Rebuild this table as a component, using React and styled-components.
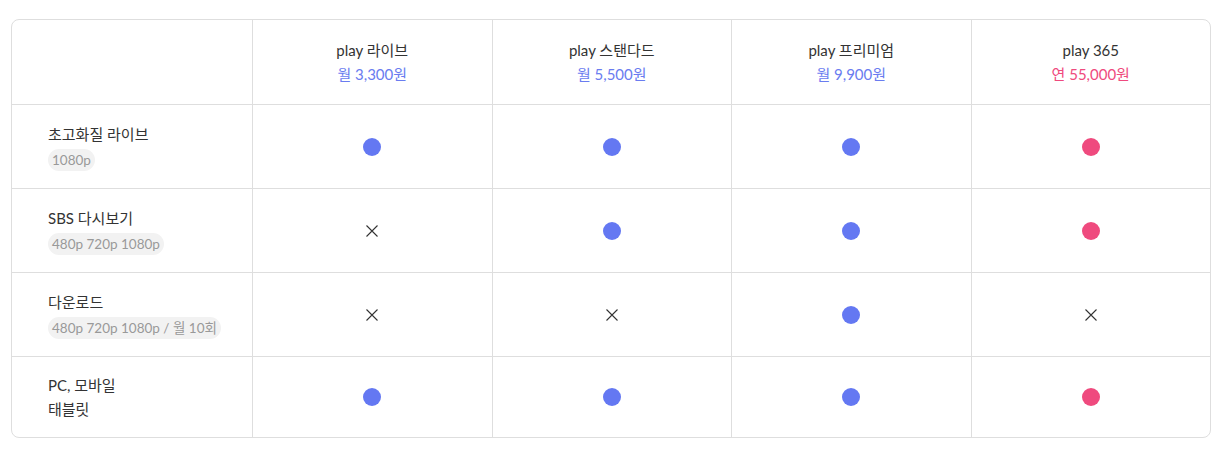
import React from "react";
import styled, { createGlobalStyle } from "styled-components";

const Global = createGlobalStyle`
  html, body { margin: 0; padding: 0; background: #fff; }
  body { font-family: "Lato", "Noto Sans CJK KR", sans-serif; color: #333; }
`;

const Page = styled.div`
  padding: 19px 15px 16px 11px;
`;

const Table = styled.div`
  width: 1200px;
  box-sizing: border-box;
  border: 1px solid #dedede;
  border-radius: 8px;
  overflow: hidden;
  display: grid;
  grid-template-columns: 240px repeat(4, 1fr);
`;

const Cell = styled.div`
  box-sizing: border-box;
  height: ${(p) => p.$h}px;
  border-left: ${(p) => (p.$first ? "none" : "1px solid #dedede")};
  border-bottom: ${(p) => (p.$last ? "none" : "1px solid #dedede")};
  display: flex;
  flex-direction: column;
  justify-content: center;
  align-items: ${(p) => (p.$left ? "flex-start" : "center")};
  padding-left: ${(p) => (p.$left ? "36px" : "0")};
`;

const PlanName = styled.div`
  font-size: 15px;
  line-height: 24px;
  color: #333;
`;

const Price = styled.div`
  font-size: 15px;
  line-height: 24px;
  color: ${(p) => (p.$pink ? "#ef4a7e" : "#6a7cf0")};
`;

const Label = styled.div`
  font-size: 15px;
  line-height: 24px;
  color: #333;
`;

const Tag = styled.span`
  display: inline-block;
  margin-top: 3px;
  background: #f2f2f2;
  border-radius: 12px;
  padding: 0 4px;
  font-size: 13.5px;
  line-height: 22px;
  color: #999;
`;

const Dot = styled.span`
  width: 18px;
  height: 18px;
  border-radius: 50%;
  background: ${(p) => (p.$pink ? "#ef4a7e" : "#6478f2")};
`;

const Cross = () => (
  <svg width="12" height="12" viewBox="0 0 12 12">
    <path d="M0.5 0.5 L11.5 11.5 M11.5 0.5 L0.5 11.5" stroke="#333" strokeWidth="1.1" fill="none" />
  </svg>
);

const plans = [
  { name: "play 라이브", price: "월 3,300원" },
  { name: "play 스탠다드", price: "월 5,500원" },
  { name: "play 프리미엄", price: "월 9,900원" },
  { name: "play 365", price: "연 55,000원", pink: true },
];

const rows = [
  { label: ["초고화질 라이브"], tag: "1080p", v: [1, 1, 1, 1] },
  { label: ["SBS 다시보기"], tag: "480p 720p 1080p", v: [0, 1, 1, 1] },
  { label: ["다운로드"], tag: "480p 720p 1080p / 월 10회", v: [0, 0, 1, 0] },
  { label: ["PC, 모바일", "태블릿"], v: [1, 1, 1, 1] },
];

export default function App() {
  return (
    <Page>
      <Global />
      <Table>
        <Cell $first $h={85} />
        {plans.map((p) => (
          <Cell key={p.name} $h={85}>
            <PlanName>{p.name}</PlanName>
            <Price $pink={p.pink}>{p.price}</Price>
          </Cell>
        ))}
        {rows.map((r, i) => {
          const last = i === rows.length - 1;
          const h = last ? 80 : 84;
          return (
            <React.Fragment key={i}>
              <Cell $first $left $last={last} $h={h}>
                {r.label.map((l) => (
                  <Label key={l}>{l}</Label>
                ))}
                {r.tag && <Tag>{r.tag}</Tag>}
              </Cell>
              {r.v.map((v, j) =>
                <Cell key={j} $last={last} $h={h}>
                  {v ? <Dot $pink={j === 3} /> : <Cross />}
                </Cell>
              )}
            </React.Fragment>
          );
        })}
      </Table>
    </Page>
  );
}
